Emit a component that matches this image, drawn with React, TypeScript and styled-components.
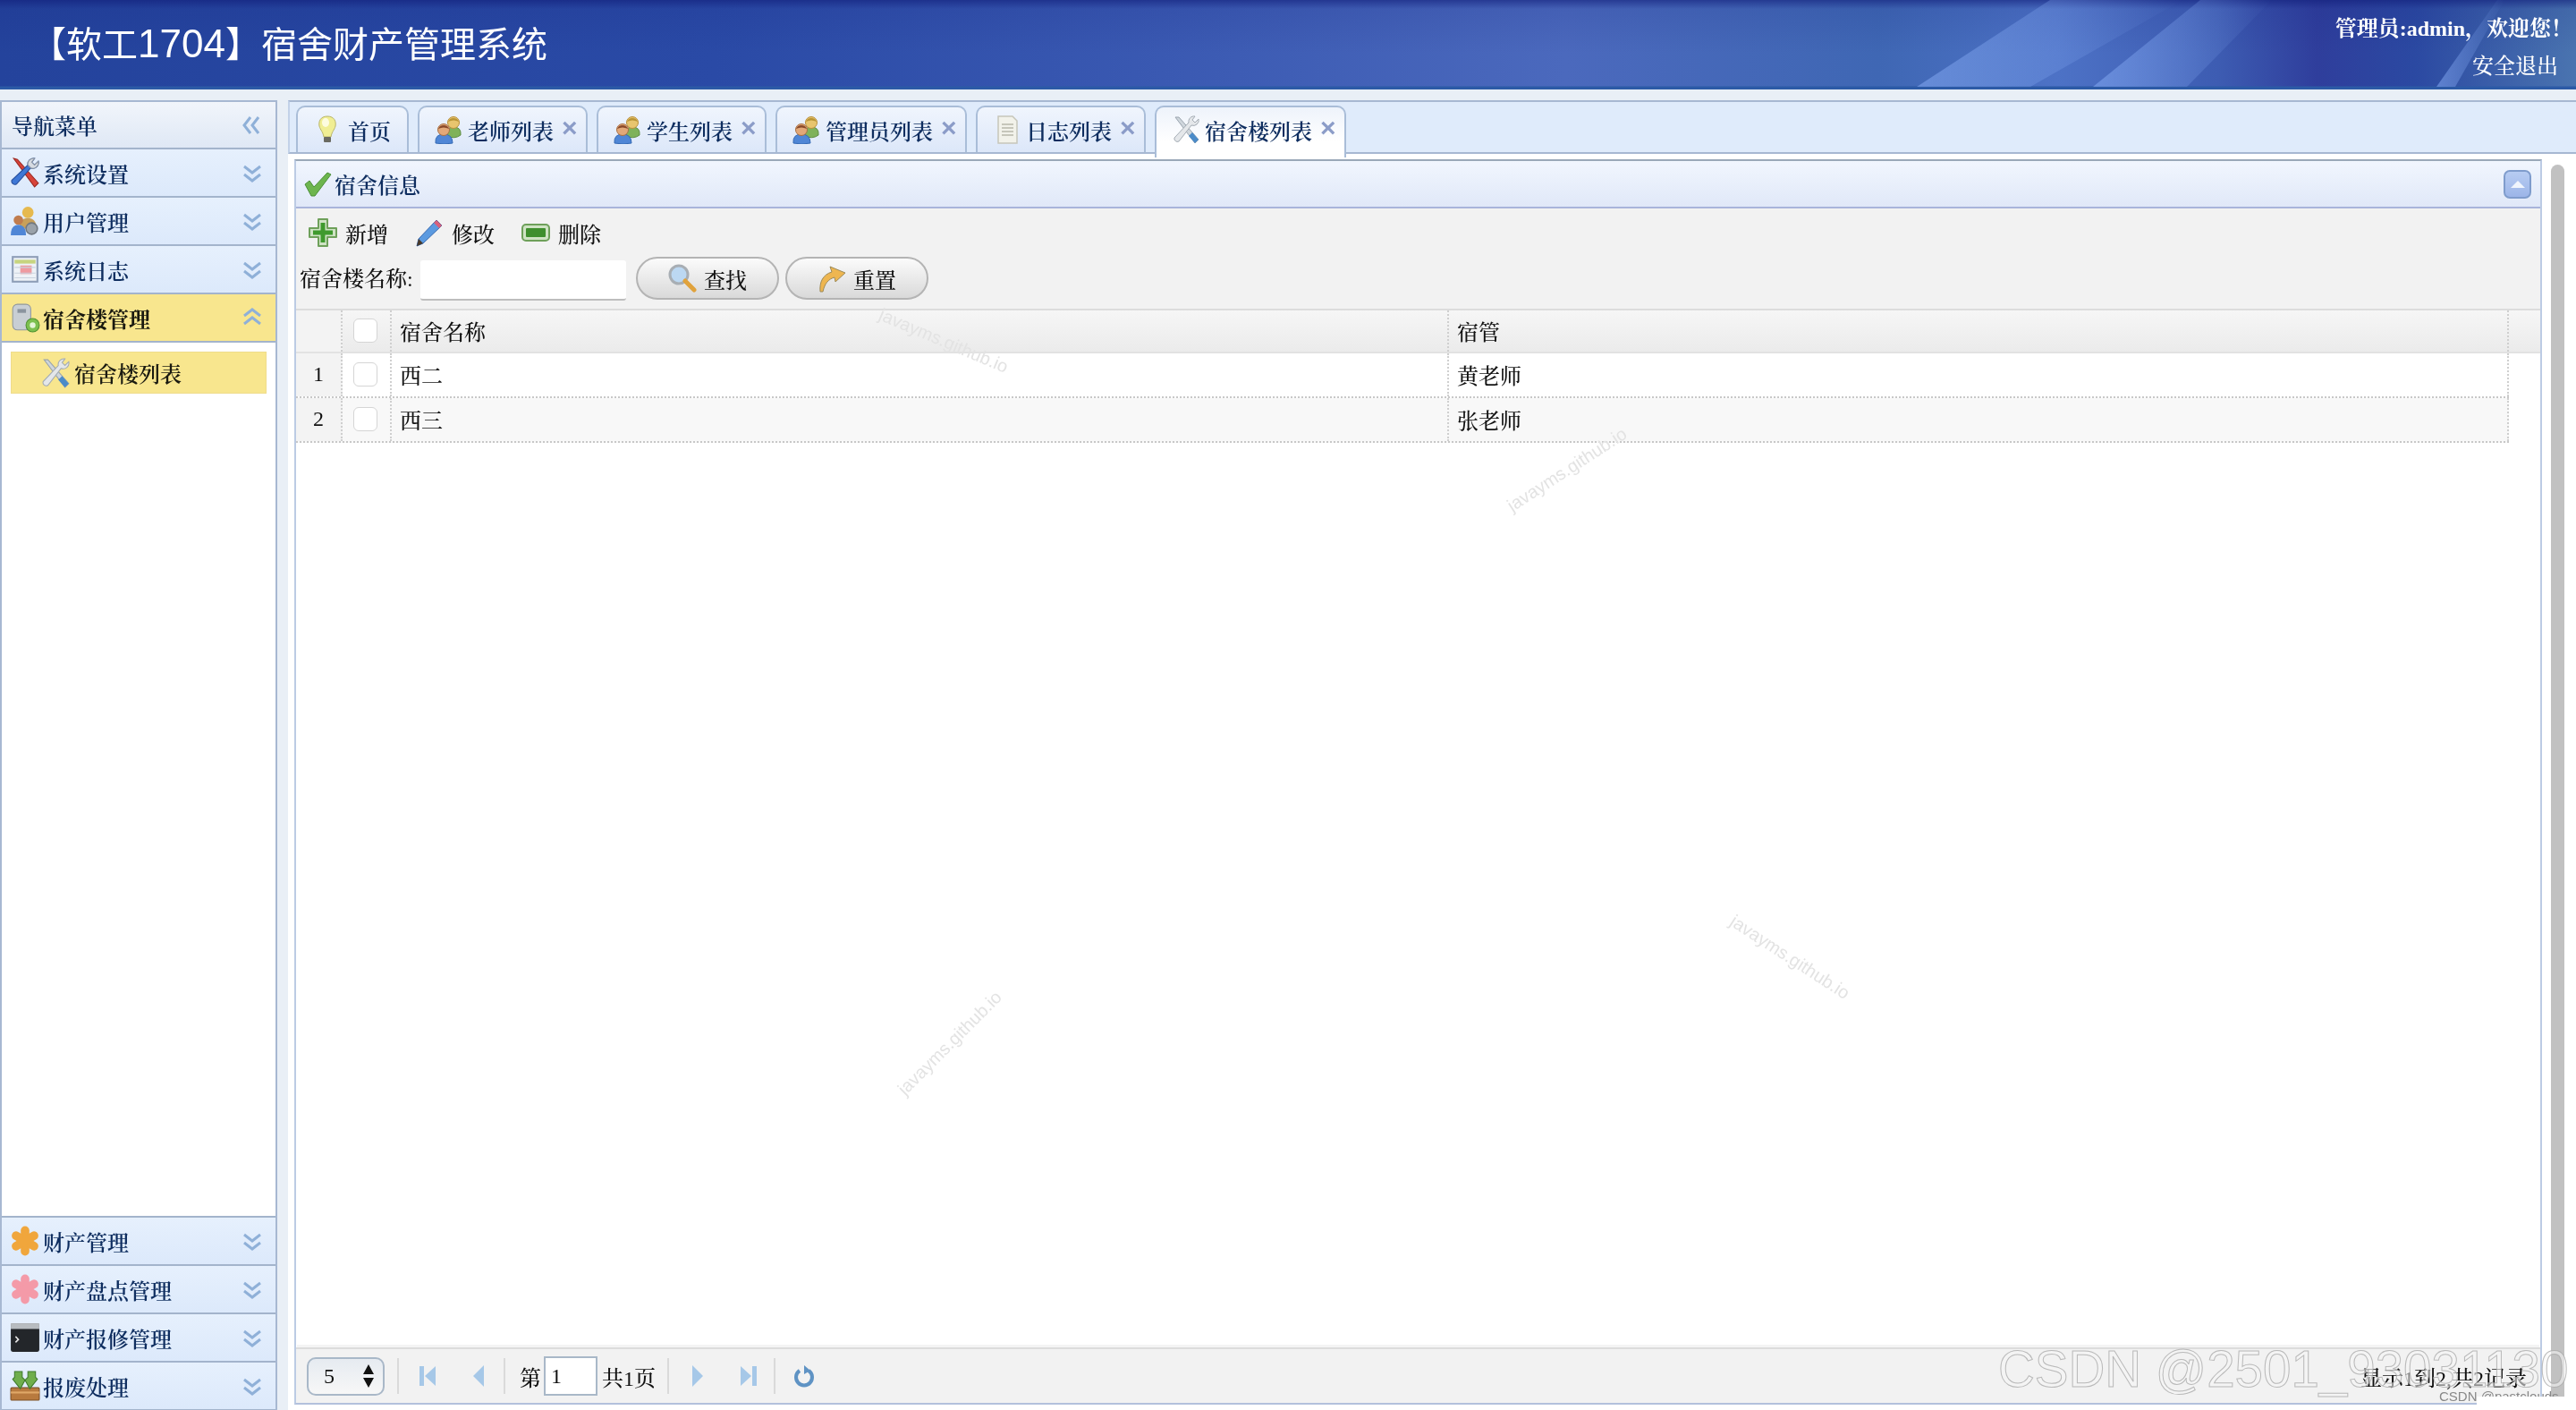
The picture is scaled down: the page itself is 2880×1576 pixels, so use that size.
import React from "react";
import styled, { createGlobalStyle } from "styled-components";

const GlobalStyle = createGlobalStyle`
  html, body { margin: 0; padding: 0; background: #fff; }
  * { box-sizing: border-box; }
  body {
    font-family: "Liberation Serif", "Noto Serif CJK SC", "Noto Sans CJK SC", serif;
    font-size: 24px;
    font-weight: 500;
    color: #111;
  }
`;

const Page = styled.div`
  position: relative;
  width: 2880px;
  height: 1576px;
  overflow: hidden;
  display: flex;
  flex-direction: column;
  background: #e9eff6;
  filter: blur(0.4px);
`;

const Header = styled.header`
  position: relative;
  flex: 0 0 100px;
  display: flex;
  align-items: center;
  justify-content: space-between;
  padding: 0 4px 0 34px;
  color: #fff;
  background:
    linear-gradient(180deg, rgba(16, 28, 120, 0.6) 0, rgba(16, 28, 120, 0.12) 10px, rgba(255, 255, 255, 0) 60px, rgba(30, 80, 160, 0) 96px, #2c5aa6 97px),
    linear-gradient(90deg, #24439c 0, #2a4aa6 800px, #3a59b2 1300px, #4b69bd 1750px, #3f67b4 2100px, #4d72c6 2300px, #3d5cb2 2480px, #2f3e9c 2590px, #2b49a2 2700px, #4a74b0 2880px);
`;

const HeaderArt = styled.svg`
  position: absolute;
  left: 0;
  top: 0;
`;

const Title = styled.h1`
  position: relative;
  margin: 0 0 6px;
  font-family: "Liberation Sans", "Noto Sans CJK SC", sans-serif;
  font-size: 40px;
  font-weight: 400;
`;

const TitleNum = styled.span`
  font-size: 44px;
`;

const UserBox = styled.div`
  position: relative;
  display: flex;
  flex-direction: column;
  align-items: flex-end;
  gap: 12px;
  padding-top: 6px;
  font-weight: 700;
  line-height: 30px;
`;

const Logout = styled.span`
  font-weight: 500;
  padding-right: 16px;
`;

const Body = styled.div`
  flex: 1;
  min-height: 0;
  display: flex;
  padding-top: 12px;
  gap: 12px;
`;

const Sidebar = styled.aside`
  flex: 0 0 310px;
  margin-bottom: -1px;
  display: flex;
  flex-direction: column;
  background: #fff;
  border-left: 2px solid #a7b8d2;
  border-right: 2px solid #a7b8d2;
  border-top: 2px solid #a7b8d2;
`;

const NavTitle = styled.div`
  flex: 0 0 53px;
  display: flex;
  align-items: center;
  justify-content: space-between;
  padding: 0 14px 0 11px;
  color: #0e2d5f;
  font-weight: 600;
  background: linear-gradient(180deg, #f1f5fb, #dfe8f5);
  border-bottom: 2px solid #a3b4cc;
`;

const MenuRow = styled.div<{ $active?: boolean }>`
  flex: 0 0 54px;
  display: flex;
  align-items: center;
  padding: 0 14px 0 9px;
  gap: 3px;
  color: ${(p) => (p.$active ? "#1a1a10" : "#0e2d5f")};
  font-weight: ${(p) => (p.$active ? 700 : 600)};
  background: ${(p) => (p.$active ? "#f8e68e" : "linear-gradient(180deg, #e6f0fd, #dce9fb)")};
  border-bottom: 2px solid #a3b4cc;
  & > svg:first-child {
    width: 34px;
    height: 34px;
  }
`;

const MenuLabel = styled.span`
  flex: 1;
`;

const SubMenu = styled.div`
  flex: 1;
  padding: 10px 10px;
  border-bottom: 2px solid #a3b4cc;
`;

const SubItem = styled.div`
  height: 47px;
  display: flex;
  align-items: center;
  gap: 4px;
  padding-left: 32px;
  color: #1a1a10;
  font-weight: 600;
  background: #f8e68e;
  border: 1px solid #efdc8c;
  & > svg {
    width: 34px;
    height: 34px;
  }
`;

const Main = styled.main`
  flex: 1;
  min-width: 0;
  display: flex;
  flex-direction: column;
`;

const TabBar = styled.div`
  flex: 0 0 60px;
  display: flex;
  align-items: flex-end;
  gap: 10px;
  padding-left: 7px;
  background: #dfebfb;
  border-top: 2px solid #a7b8d2;
  border-bottom: 2px solid #a7b8d2;
  border-left: 2px solid #c3d2e8;
`;

const Tab = styled.div<{ $active?: boolean }>`
  position: relative;
  height: ${(p) => (p.$active ? "58px" : "52px")};
  margin-bottom: ${(p) => (p.$active ? "-6px" : "0")};
  display: flex;
  align-items: center;
  padding: 0 13px ${(p) => (p.$active ? "6px" : "0")} 17px;
  gap: 5px;
  color: #0e2d5f;
  font-weight: 600;
  background: ${(p) => (p.$active ? "linear-gradient(180deg, #eef3fb, #fff 70%)" : "linear-gradient(180deg, #f0f5fd, #dce7f9)")};
  border: 2px solid #a9bdd8;
  border-bottom: none;
  border-radius: 10px 10px 0 0;
`;

const TabText = styled.span<{ $home?: boolean }>`
  margin-left: ${(p) => (p.$home ? "2px" : "0")};
  margin-right: ${(p) => (p.$home ? "5px" : "0")};
`;

const CloseMark = styled.span`
  width: 14px;
  margin: -4px 0 0 4px;
  text-align: center;
  color: #8b9cc8;
  font: 700 30px/1 "Liberation Sans", sans-serif;
`;

const ScrollArea = styled.div`
  flex: 1;
  min-height: 0;
  display: flex;
  background: #fff;
  padding: 6px 0 6px 7px;
`;

const Panel = styled.section`
  flex: 0 0 2513px;
  display: flex;
  flex-direction: column;
  background: #f2f2f2;
  border: 2px solid #bccbe4;
  border-top-color: #9aa8b8;
  border-bottom-color: #b3c1dc;
`;

const ScrollThumb = styled.div`
  flex: 0 0 15px;
  margin: 6px 0 0 10px;
  background: #c1c1c1;
  border-radius: 8px;
`;

const PanelHead = styled.div`
  flex: 0 0 53px;
  display: flex;
  align-items: center;
  padding: 0 10px 0 8px;
  gap: 3px;
  color: #0e2d5f;
  font-weight: 600;
  background: linear-gradient(180deg, #f1f6fe, #e0e8f8);
  border-bottom: 2px solid #a8b4da;
`;

const PanelTitle = styled.span`
  flex: 1;
`;

const CollapseBtn = styled.div`
  width: 31px;
  height: 32px;
  display: flex;
  align-items: center;
  justify-content: center;
  background: linear-gradient(180deg, #b7ccf2, #9cb5e8);
  border: 2px solid #7f9ccc;
  border-radius: 7px;
  &::before {
    content: "";
    border-left: 8px solid transparent;
    border-right: 8px solid transparent;
    border-bottom: 8px solid #f0f5fd;
  }
`;

const Actions = styled.div`
  height: 54px;
  display: flex;
  align-items: center;
  padding-left: 14px;
  gap: 30px;
`;

const ActionBtn = styled.div`
  display: flex;
  align-items: center;
  gap: 9px;
`;

const SearchRow = styled.div`
  height: 58px;
  display: flex;
  align-items: flex-start;
  padding-left: 4px;
  gap: 7px;
`;

const SearchLabel = styled.label`
  width: 128px;
  line-height: 50px;
  white-space: nowrap;
`;

const SearchInput = styled.div`
  width: 230px;
  height: 45px;
  margin: 4px 4px 0 0;
  background: #fff;
  border-bottom: 2px solid #bdbdbd;
  border-radius: 3px;
`;

const PillBtn = styled.div`
  width: 160px;
  height: 48px;
  display: flex;
  align-items: center;
  justify-content: center;
  gap: 8px;
  background: linear-gradient(180deg, #fbfbfb, #d9d9d9);
  border: 2px solid #b4b4b4;
  border-radius: 24px;
`;

const Grid = styled.div`
  flex: 1;
  display: flex;
  flex-direction: column;
  background: #fff;
`;

const GridRow = styled.div<{ $head?: boolean; $alt?: boolean }>`
  display: grid;
  grid-template-columns: 52px 55px 1182px 1185px ${(p) => (p.$head ? "1fr" : "")};
  height: 50px;
  width: ${(p) => (p.$head ? "100%" : "2474px")};
  background: ${(p) => (p.$head ? "linear-gradient(180deg, #f6f6f6, #ebebeb)" : p.$alt ? "#f8f8f8" : "#fff")};
  border-top: ${(p) => (p.$head ? "2px solid #dcdcdc" : "none")};
  border-bottom: ${(p) => (p.$head ? "2px solid #e2e2e2" : "2px dotted #c8c8c8")};
`;

const Cell = styled.div<{ $num?: boolean; $center?: boolean }>`
  display: flex;
  align-items: center;
  justify-content: ${(p) => (p.$num || p.$center ? "center" : "flex-start")};
  padding: 0 0 2px ${(p) => (p.$num || p.$center ? "0" : "9px")};
  background: ${(p) => (p.$num ? "#f3f3f3" : "transparent")};
  border-right: 2px dotted #cfcfcf;
`;

const Checkbox = styled.div`
  width: 27px;
  height: 27px;
  margin-right: 2px;
  background: #fff;
  border: 1px solid #d5d5d5;
  border-radius: 6px;
`;

const GridSpace = styled.div`
  flex: 1;
`;

const Pager = styled.div`
  flex: 0 0 62px;
  display: flex;
  align-items: center;
  padding: 0 15px 0 12px;
  background: #f2f2f2;
  border-top: 2px solid #dcdcdc;
  box-shadow: 0 -4px 0 -1px #f4f4f4;
`;

const PageSize = styled.div`
  width: 87px;
  height: 43px;
  display: flex;
  align-items: center;
  justify-content: space-between;
  padding: 0 9px 0 17px;
  background: linear-gradient(180deg, #e6ebf1, #f7f7f7);
  border: 2px solid #a9b8c8;
  border-radius: 10px;
`;

const Updown = styled.svg`
  display: block;
`;

const PagerSep = styled.div<{ $l: number; $r: number }>`
  width: 2px;
  height: 40px;
  margin: 0 ${(p) => p.$r}px 0 ${(p) => p.$l}px;
  background: #dadada;
`;

const PagerBtn = styled.div`
  flex: 0 0 57px;
  display: flex;
  align-items: center;
  justify-content: center;
`;

const PageInput = styled.div`
  width: 60px;
  height: 44px;
  margin: 0 5px 0 3px;
  padding-left: 6px;
  line-height: 40px;
  background: #fff;
  border: 2px solid #a9b8c8;
`;

const PagerInfo = styled.span`
  margin-left: auto;
`;

const Watermark = styled.span<{ $x: number; $y: number; $deg: number }>`
  position: absolute;
  left: ${(p) => p.$x}px;
  top: ${(p) => p.$y}px;
  transform: translate(-50%, -50%) rotate(${(p) => p.$deg}deg);
  font: 300 20px "Liberation Sans", sans-serif;
  color: #e3e3e3;
  white-space: nowrap;
  pointer-events: none;
`;

const CsdnMark = styled.span`
  position: absolute;
  left: 2234px;
  top: 1498px;
  font: 400 56.5px "Liberation Sans", sans-serif;
  color: rgba(245, 245, 245, 0.55);
  -webkit-text-stroke: 1px rgba(165, 165, 165, 0.75);
  white-space: nowrap;
`;

const CsdnSmall = styled.span`
  position: absolute;
  left: 2727px;
  top: 1552px;
  font: 400 15px/18px "Liberation Sans", sans-serif;
  color: #888;
  white-space: nowrap;
`;

const CsdnPatch = styled.div`
  position: absolute;
  left: 2769px;
  top: 1561px;
  width: 99px;
  height: 12px;
  background: #fff;
`;

type IconProps = { size?: number };

const Svg = ({ size = 32, children }: IconProps & { children: React.ReactNode }) => (
  <svg width={size} height={size} viewBox="0 0 32 32" style={{ flex: "none" }}>
    {children}
  </svg>
);

const ToolsIcon = () => (
  <Svg>
    <path d="M4 1 L8 2 L30 27 L26 31 Z" fill="#d8433a" stroke="#9c2a24" strokeWidth="1" />
    <path d="M30 4 a6 6 0 0 1 -8 7 L7 28 a3.5 3.5 0 0 1 -5 -4 L19 8 a6 6 0 0 1 7 -7 l-3 4 3 3 Z" fill="#3f78d6" stroke="#274f9c" strokeWidth="1" />
    <path d="M30 4 a6 6 0 0 1 -8 7 L19 8 a6 6 0 0 1 7 -7 l-3 4 3 3 Z" fill="#d6dbe2" stroke="#8d96a3" strokeWidth="1" />
  </Svg>
);

const GrayToolsIcon = () => (
  <Svg>
    <path d="M4 2 L8 2 L30 27 L26 31 Z" fill="#cfd6dc" stroke="#9aa4ae" strokeWidth="1" />
    <path d="M30 4 a6 6 0 0 1 -8 7 L8 29 a3.5 3.5 0 0 1 -5 -4 L19 8 a6 6 0 0 1 7 -7 l-3 4 3 3 Z" fill="#e4e7ea" stroke="#a4acb4" strokeWidth="1" />
    <path d="M30 27 L26 31 L19 23 L23 19 Z" fill="#4b8bc8" />
  </Svg>
);

const UsersIcon = () => (
  <Svg>
    <path d="M14 23 q-2 -10 7 -10 q9 0 8 9 q-7 5 -15 1Z" fill="#7fb25a" stroke="#5d8c40" strokeWidth="1" />
    <circle cx="21" cy="8" r="6.5" fill="#e8c56e" stroke="#b98f3a" strokeWidth="1" />
    <path d="M15 7 a6.5 6.5 0 0 1 12 0 q-6 -3 -12 0Z" fill="#b89436" />
    <path d="M1 31 q-1 -10 9 -10 q10 0 10 10 q-9 2 -19 0Z" fill="#4f86d6" stroke="#356ab4" strokeWidth="1" />
    <circle cx="10" cy="16" r="6.5" fill="#e2a878" stroke="#a86e42" strokeWidth="1" />
    <path d="M4 15 a6.5 6.5 0 0 1 12 0 q-6 -3 -12 0Z" fill="#8a4a2a" />
  </Svg>
);

const ManagerIcon = () => (
  <Svg>
    <circle cx="19" cy="7" r="6" fill="#e6b94e" />
    <path d="M10 24 q0 -11 9 -11 q9 0 9 11Z" fill="#c8a05a" />
    <circle cx="9" cy="15" r="5" fill="#c07c4e" />
    <path d="M1 31 q0 -11 8 -11 q8 0 8 11Z" fill="#4f86d6" />
    <circle cx="23" cy="24" r="6" fill="#9aa2aa" stroke="#6f7780" strokeWidth="1.5" />
  </Svg>
);

const LogIcon = () => (
  <Svg>
    <rect x="3" y="3" width="26" height="26" fill="#eef2f7" stroke="#8f9fb8" strokeWidth="2" />
    <rect x="5" y="6" width="22" height="4" fill="#c7d47f" />
    <rect x="11" y="12" width="12" height="9" fill="#ef9aa0" />
    <path d="M5 14 H27 M5 20 H27 M5 25 H27" stroke="#c9d2de" strokeWidth="1" />
  </Svg>
);

const BuildingIcon = () => (
  <Svg>
    <rect x="3" y="2" width="19" height="27" rx="5" fill="#c8ced4" stroke="#8f979f" strokeWidth="1" />
    <rect x="8" y="7" width="9" height="4" fill="#8a949e" />
    <circle cx="24" cy="24" r="7" fill="#7cc04e" stroke="#4f9230" strokeWidth="1" />
    <circle cx="24" cy="24" r="3" fill="#e5f5d8" />
  </Svg>
);

const StarIcon = ({ color }: { color: string }) => (
  <Svg>
    <g stroke={color} strokeWidth="9" strokeLinecap="round">
      <path d="M16 5 V27" />
      <path d="M6.5 10.5 L25.5 21.5" />
      <path d="M25.5 10.5 L6.5 21.5" />
    </g>
  </Svg>
);

const TerminalIcon = () => (
  <Svg>
    <rect x="1" y="1" width="30" height="30" rx="2" fill="#23262a" />
    <rect x="1" y="1" width="30" height="6" fill="#b8bcc0" />
    <path d="M6 15 l3 3 -3 3" stroke="#e6e6e6" strokeWidth="1.5" fill="none" />
  </Svg>
);

const BoxIcon = () => (
  <Svg>
    <rect x="1" y="18" width="30" height="13" rx="1" fill="#b87a3e" stroke="#7d4e22" strokeWidth="1" />
    <rect x="1" y="22" width="30" height="2" fill="#e0a868" />
    <path d="M5 1 H13 V7 L16 10 L11 19 L3 9 L5 7Z" fill="#6fae4c" stroke="#3f7a2c" strokeWidth="1" />
    <path d="M19 1 H27 V7 L29 9 L21 19 L16 10 L19 7Z" fill="#6fae4c" stroke="#3f7a2c" strokeWidth="1" />
  </Svg>
);

const BulbIcon = () => (
  <Svg>
    <path d="M16 1 C8 1 6 7 7 12 C8 16 11 18 12 24 H20 C21 18 24 16 25 12 C26 7 24 1 16 1Z" fill="#f0ee94" stroke="#b9b56a" strokeWidth="1" />
    <ellipse cx="14" cy="8" rx="4" ry="5" fill="#fdfce0" />
    <rect x="12" y="24" width="8" height="6" rx="1" fill="#6a6a62" />
  </Svg>
);

const DocIcon = () => (
  <Svg>
    <path d="M6 1 H22 L27 6 V31 H6Z" fill="#f2f2ea" stroke="#c6c6ba" strokeWidth="1.5" />
    <path d="M10 10 H23 M10 14 H23 M10 18 H23 M10 22 H23" stroke="#b8b8aa" strokeWidth="1.5" />
  </Svg>
);

const CheckIcon = () => (
  <Svg>
    <path d="M2 16 L7 12 L12 19 L27 3 L31 5 L13 29 L9 29Z" fill="#6db54e" stroke="#4b8f38" strokeWidth="1" />
  </Svg>
);

const PlusIcon = () => (
  <Svg>
    <path d="M11 1 H21 V11 H31 V21 H21 V31 H11 V21 H1 V11 H11Z" fill="#cfe3c4" stroke="#6ea05a" strokeWidth="2" strokeLinejoin="round" />
    <path d="M13.5 5 H18.5 V13.5 H27 V18.5 H18.5 V27 H13.5 V18.5 H5 V13.5 H13.5Z" fill="#3f9a2e" />
  </Svg>
);

const PencilIcon = () => (
  <Svg>
    <path d="M24 2 L30 8 L9 28 L2 31 L4 23Z" fill="#5b9ae0" stroke="#3669b0" strokeWidth="1" />
    <path d="M24 2 L30 8 L27 11 L21 5Z" fill="#d8607a" />
    <path d="M4 23 L9 28 L2 31Z" fill="#4a3a2a" />
  </Svg>
);

const MinusIcon = () => (
  <Svg>
    <rect x="1" y="7" width="30" height="18" rx="4" fill="#cfe3c4" stroke="#6ea05a" strokeWidth="2" />
    <rect x="5" y="11" width="22" height="10" rx="1" fill="#3f8f2e" />
  </Svg>
);

const SearchIcon = () => (
  <Svg>
    <circle cx="12" cy="12" r="10" fill="#bcd8f2" stroke="#a8aeb4" strokeWidth="3" />
    <path d="M19 19 L29 29" stroke="#e0a23c" strokeWidth="5" strokeLinecap="round" />
  </Svg>
);

const ReplyIcon = () => (
  <Svg>
    <path d="M3 31 C2 20 6 12 16 9 L14 3 L31 10 L20 20 L19 15 C12 17 8 22 6 31Z" fill="#eeb650" stroke="#9c8a5a" strokeWidth="1" />
  </Svg>
);

const Chevrons = ({ dir }: { dir: "down" | "up" | "left" }) => {
  const rotate = dir === "down" ? 0 : dir === "up" ? 180 : 90;
  return (
    <svg width="24" height="24" viewBox="0 0 24 24" style={{ transform: `rotate(${rotate}deg)`, flex: "none" }}>
      <path d="M3 5 L12 12 L21 5 M3 14 L12 21 L21 14" fill="none" stroke="#8fb0d8" strokeWidth="3" />
    </svg>
  );
};

const topMenus = [
  { label: "系统设置", icon: <ToolsIcon /> },
  { label: "用户管理", icon: <ManagerIcon /> },
  { label: "系统日志", icon: <LogIcon /> },
];

const bottomMenus = [
  { label: "财产管理", icon: <StarIcon color="#f0a63c" /> },
  { label: "财产盘点管理", icon: <StarIcon color="#f49aa8" /> },
  { label: "财产报修管理", icon: <TerminalIcon /> },
  { label: "报废处理", icon: <BoxIcon /> },
];

const tabs = [
  { label: "老师列表", icon: <UsersIcon /> },
  { label: "学生列表", icon: <UsersIcon /> },
  { label: "管理员列表", icon: <UsersIcon /> },
  { label: "日志列表", icon: <DocIcon /> },
];

const rows = [
  { id: 1, name: "西二", keeper: "黄老师" },
  { id: 2, name: "西三", keeper: "张老师" },
];

export default function App() {
  return (
    <Page>
      <GlobalStyle />
      <Header>
        <HeaderArt width="2880" height="97" viewBox="0 0 2880 97">
          <defs>
            <linearGradient id="streak" x1="0" y1="0" x2="1" y2="0">
              <stop offset="0" stopColor="#7fa4ee" stopOpacity="0.6" />
              <stop offset="1" stopColor="#7fa4ee" stopOpacity="0" />
            </linearGradient>
          </defs>
          <polygon points="2143,97 2292,0 2440,0 2270,97" fill="url(#streak)" />
          <polygon points="2340,97 2460,0 2540,0 2445,97" fill="url(#streak)" />
          <polygon points="2724,97 2792,0 2800,0 2745,97" fill="url(#streak)" />
        </HeaderArt>
        <Title>
          【软工<TitleNum>1704</TitleNum>】宿舍财产管理系统
        </Title>
        <UserBox>
          <span>管理员:admin，欢迎您！</span>
          <Logout>安全退出</Logout>
        </UserBox>
      </Header>
      <Body>
        <Sidebar>
          <NavTitle>
            导航菜单
            <Chevrons dir="left" />
          </NavTitle>
          {topMenus.map((m) => (
            <MenuRow key={m.label}>
              {m.icon}
              <MenuLabel>{m.label}</MenuLabel>
              <Chevrons dir="down" />
            </MenuRow>
          ))}
          <MenuRow $active>
            <BuildingIcon />
            <MenuLabel>宿舍楼管理</MenuLabel>
            <Chevrons dir="up" />
          </MenuRow>
          <SubMenu>
            <SubItem>
              <GrayToolsIcon />
              宿舍楼列表
            </SubItem>
          </SubMenu>
          {bottomMenus.map((m) => (
            <MenuRow key={m.label}>
              {m.icon}
              <MenuLabel>{m.label}</MenuLabel>
              <Chevrons dir="down" />
            </MenuRow>
          ))}
        </Sidebar>
        <Main>
          <TabBar>
            <Tab>
              <BulbIcon />
              <TabText $home>首页</TabText>
            </Tab>
            {tabs.map((t) => (
              <Tab key={t.label}>
                {t.icon}
                <TabText>{t.label}</TabText>
                <CloseMark>×</CloseMark>
              </Tab>
            ))}
            <Tab $active>
              <GrayToolsIcon />
              <TabText>宿舍楼列表</TabText>
              <CloseMark>×</CloseMark>
            </Tab>
          </TabBar>
          <ScrollArea>
            <Panel>
              <PanelHead>
                <CheckIcon />
                <PanelTitle>宿舍信息</PanelTitle>
                <CollapseBtn />
              </PanelHead>
              <Actions>
                <ActionBtn>
                  <PlusIcon />
                  新增
                </ActionBtn>
                <ActionBtn>
                  <PencilIcon />
                  修改
                </ActionBtn>
                <ActionBtn>
                  <MinusIcon />
                  删除
                </ActionBtn>
              </Actions>
              <SearchRow>
                <SearchLabel>宿舍楼名称:</SearchLabel>
                <SearchInput />
                <PillBtn>
                  <SearchIcon />
                  查找
                </PillBtn>
                <PillBtn>
                  <ReplyIcon />
                  重置
                </PillBtn>
              </SearchRow>
              <Grid>
                <GridRow $head>
                  <Cell $num />
                  <Cell $center>
                    <Checkbox />
                  </Cell>
                  <Cell>宿舍名称</Cell>
                  <Cell>宿管</Cell>
                </GridRow>
                {rows.map((r, i) => (
                  <GridRow key={r.id} $alt={i % 2 === 1}>
                    <Cell $num>{r.id}</Cell>
                    <Cell $center>
                      <Checkbox />
                    </Cell>
                    <Cell>{r.name}</Cell>
                    <Cell>{r.keeper}</Cell>
                  </GridRow>
                ))}
                <GridSpace />
              </Grid>
              <Pager>
                <PageSize>
                  5
                  <Updown width="14" height="30" viewBox="0 0 14 30">
                    <path d="M7 2 L13 13 H1Z M7 28 L13 17 H1Z" fill="#111" />
                  </Updown>
                </PageSize>
                <PagerSep $l={14} $r={3} />
                <PagerBtn>
                  <svg width="20" height="26" viewBox="0 0 20 26">
                    <path d="M1 2 H6 V24 H1Z M19 2 V24 L7 13Z" fill="#a6c8e8" />
                  </svg>
                </PagerBtn>
                <PagerBtn>
                  <svg width="14" height="26" viewBox="0 0 14 26">
                    <path d="M13 1 V25 L1 13Z" fill="#a6c8e8" />
                  </svg>
                </PagerBtn>
                <PagerSep $l={0} $r={16} />
                第
                <PageInput>1</PageInput>
                共1页
                <PagerSep $l={13} $r={3} />
                <PagerBtn>
                  <svg width="14" height="26" viewBox="0 0 14 26">
                    <path d="M1 1 V25 L13 13Z" fill="#a6c8e8" />
                  </svg>
                </PagerBtn>
                <PagerBtn>
                  <svg width="20" height="26" viewBox="0 0 20 26">
                    <path d="M19 2 H14 V24 H19Z M1 2 V24 L13 13Z" fill="#a6c8e8" />
                  </svg>
                </PagerBtn>
                <PagerSep $l={0} $r={3} />
                <PagerBtn>
                  <svg width="24" height="28" viewBox="0 0 24 28">
                    <path d="M7 8 A9 9 0 1 0 17 8" fill="none" stroke="#5f93c4" strokeWidth="4" />
                    <path d="M12 2 L19 8 L12 12Z" fill="#5f93c4" />
                  </svg>
                </PagerBtn>
                <PagerInfo>显示1到2,共2记录</PagerInfo>
              </Pager>
            </Panel>
            <ScrollThumb />
          </ScrollArea>
        </Main>
      </Body>
      <Watermark $x={1055} $y={381} $deg={23}>javayms.github.io</Watermark>
      <Watermark $x={1752} $y={525} $deg={-33}>javayms.github.io</Watermark>
      <Watermark $x={2001} $y={1070} $deg={33}>javayms.github.io</Watermark>
      <Watermark $x={1062} $y={1166} $deg={-45}>javayms.github.io</Watermark>
      <CsdnMark>CSDN @2501_93031130</CsdnMark>
      <CsdnSmall>CSDN @pastclouds</CsdnSmall>
      <CsdnPatch />
    </Page>
  );
}
